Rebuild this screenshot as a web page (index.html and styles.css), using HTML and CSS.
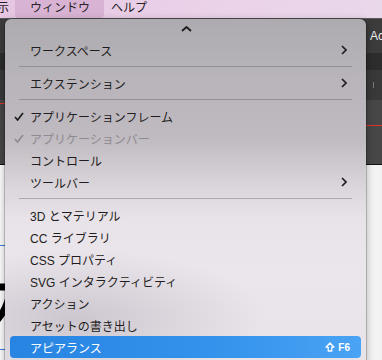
FILE: index.html
```html
<!DOCTYPE html>
<html lang="ja">
<head>
  <meta charset="UTF-8">
  <title>ウィンドウ メニュー</title>
  <link rel="stylesheet" href="styles.css">
</head>
<body>
  <div class="menubar">
    <span class="bar-item cut">示</span>
    <span class="bar-item active">ウィンドウ</span>
    <span class="bar-item">ヘルプ</span>
  </div>

  <div class="app">
    <div class="band band-1"><span class="tab-left">ｆT</span><span class="tab-right">Ac</span></div>
    <div class="band band-2"></div>
    <div class="band band-3"><span class="tick"></span></div>
    <div class="band band-4"><span class="red-left"></span><span class="red-right"></span></div>
    <div class="doc">
      <span class="guide guide-1"></span>
      <svg class="glyph" width="12" height="60" viewBox="0 0 12 60">
        <path d="M-4 8 L10 8 L10 14 C8 24 4 34 -4 42" fill="none" stroke="#000" stroke-width="7"/>
      </svg>
      <span class="guide guide-2"></span>
    </div>
  </div>

  <div class="menu">
    <div class="scroll-up">
      <svg width="11" height="6" viewBox="0 0 11 6"><polyline points="1,5 5.5,1 10,5" fill="none" stroke="#1e1e1e" stroke-width="1.8" stroke-linejoin="round"/></svg>
    </div>

    <div class="item"><span class="gutter"></span><span class="label">ワークスペース</span><span class="arrow"><svg width="6" height="10" viewBox="0 0 6 10"><polyline points="1,1 5,5 1,9" fill="none" stroke="#1e1e1e" stroke-width="1.7"/></svg></span></div>
    <div class="sep"></div>
    <div class="item"><span class="gutter"></span><span class="label">エクステンション</span><span class="arrow"><svg width="6" height="10" viewBox="0 0 6 10"><polyline points="1,1 5,5 1,9" fill="none" stroke="#1e1e1e" stroke-width="1.7"/></svg></span></div>
    <div class="sep"></div>
    <div class="item"><span class="gutter"><svg width="10" height="9" viewBox="0 0 10 9"><polyline points="1,5 3.6,8 9,1" fill="none" stroke="#1e1e1e" stroke-width="1.7"/></svg></span><span class="label">アプリケーションフレーム</span></div>
    <div class="item disabled"><span class="gutter"><svg width="10" height="9" viewBox="0 0 10 9"><polyline points="1,5 3.6,8 9,1" fill="none" stroke="#8e8b91" stroke-width="1.7"/></svg></span><span class="label">アプリケーションバー</span></div>
    <div class="item"><span class="gutter"></span><span class="label">コントロール</span></div>
    <div class="item"><span class="gutter"></span><span class="label">ツールバー</span><span class="arrow"><svg width="6" height="10" viewBox="0 0 6 10"><polyline points="1,1 5,5 1,9" fill="none" stroke="#1e1e1e" stroke-width="1.7"/></svg></span></div>
    <div class="sep"></div>
    <div class="item"><span class="gutter"></span><span class="label">3D とマテリアル</span></div>
    <div class="item"><span class="gutter"></span><span class="label">CC ライブラリ</span></div>
    <div class="item"><span class="gutter"></span><span class="label">CSS プロパティ</span></div>
    <div class="item"><span class="gutter"></span><span class="label">SVG インタラクティビティ</span></div>
    <div class="item"><span class="gutter"></span><span class="label">アクション</span></div>
    <div class="item"><span class="gutter"></span><span class="label">アセットの書き出し</span></div>
    <div class="item selected"><span class="gutter"></span><span class="label">アピアランス</span>
      <span class="shortcut"><svg width="10" height="10" viewBox="0 0 10 10"><path d="M5 1 L9 5.2 L6.8 5.2 L6.8 9 L3.2 9 L3.2 5.2 L1 5.2 Z" fill="none" stroke="#fff" stroke-width="1.3" stroke-linejoin="round"/></svg>F6</span>
    </div>
  </div>
</body>
</html>
```

FILE: styles.css
```css
* {
  box-sizing: border-box;
}

body {
  margin: 0;
  width: 382px;
  height: 360px;
  overflow: hidden;
  position: relative;
  font-family: "Liberation Sans", "Noto Sans CJK JP", sans-serif;
  background: #fff;
}

/* top menu bar */
.menubar {
  height: 18px;
  display: flex;
  align-items: center;
  background: linear-gradient(90deg, #e6c6e3, #ebd3e9 60%, #e9d7ea);
  font-size: 12px;
  color: #262326;
}

.bar-item {
  height: 18px;
  line-height: 17px;
  padding: 0 14px;
}

.bar-item.cut {
  margin-left: -3px;
  padding: 0;
}

.bar-item.active {
  background: #d8b3d4;
  border-radius: 0 0 4px 4px;
  padding: 0 14px 0 15px;
  margin-left: 6px;
}

.bar-item:last-child {
  padding-left: 7px;
}

/* app window behind the menu */
.app {
  display: flex;
  flex-direction: column;
}

.band {
  position: relative;
  color: #eee;
  font-size: 12px;
}

.band-1 {
  height: 35px;
  background: #3c3c3c;
  border-top: 1px solid #5a5a5a;
}

.tab-left {
  position: absolute;
  left: -3px;
  top: 38px;
}

.tab-right {
  position: absolute;
  right: -2px;
  top: 10px;
}

.band-2 {
  height: 17px;
  background: #2d2d2d;
}

.band-3 {
  height: 30px;
  background: #393939;
}

.tick {
  position: absolute;
  right: 8px;
  top: 12px;
  width: 1px;
  height: 6px;
  background: #777;
}

.band-4 {
  height: 65px;
  background: #474747;
  border-bottom: 1px solid #111;
}

.red-left,
.red-right {
  position: absolute;
  height: 1px;
  background: #d8352b;
}

.red-left {
  left: 0;
  width: 6px;
  top: 3px;
}

.red-right {
  right: 0;
  width: 18px;
  top: 25px;
}

.doc {
  position: relative;
  height: 195px;
  background: linear-gradient(90deg, #fff 0, #fff 92%, #f1f1f1);
}

.guide {
  position: absolute;
  left: 0;
  width: 8px;
  height: 1px;
  background: #3f7ae0;
}

.guide-1 {
  top: 80px;
}

.guide-2 {
  top: 184px;
}

.glyph {
  position: absolute;
  left: 0;
  top: 114px;
}

/* dropdown menu */
.menu {
  position: absolute;
  z-index: 2;
  left: 5px;
  top: 19px;
  width: 361px;
  height: 350px;
  border-radius: 6px;
  background:
    radial-gradient(ellipse 190px 70px at 70px 300px, rgba(150, 145, 155, 0.35), rgba(150, 145, 155, 0) 100%),
    linear-gradient(180deg, #adabb0 0, #b8b4ba 60px, #c0bac1 120px, #d9d4da 165px, #e8e3e9 200px, #ebe6ec 250px, #e8e3e9 100%);
  box-shadow: 0 0 0 0.5px rgba(0, 0, 0, 0.35), 0 3px 10px rgba(0, 0, 0, 0.35);
  font-size: 12px;
  color: #1f1d20;
}

.scroll-up {
  height: 20px;
  display: flex;
  justify-content: center;
  align-items: center;
  padding-left: 1px;
}

.item {
  height: 22px;
  margin: 0 5px;
  padding: 0 14px 0 4px;
  display: flex;
  align-items: center;
  border-radius: 4px;
}

.gutter {
  width: 16px;
  flex: none;
  display: flex;
  align-items: center;
}

.label {
  flex: 1;
  white-space: nowrap;
}

.arrow {
  display: flex;
  padding-right: 0;
}

.disabled {
  color: #8e8b91;
}

.sep {
  height: 11px;
  margin: 0 14px;
  display: flex;
  align-items: center;
}

.sep::after {
  content: "";
  flex: 1;
  height: 1px;
  background: rgba(80, 76, 84, 0.35);
}

.selected {
  background: linear-gradient(90deg, #2784e2, #3593ec 60%, #4aa3f4);
  color: #fff;
  padding-right: 11px;
}

.shortcut {
  display: flex;
  align-items: center;
  gap: 3px;
  font-size: 10px;
  font-weight: bold;
}
```
